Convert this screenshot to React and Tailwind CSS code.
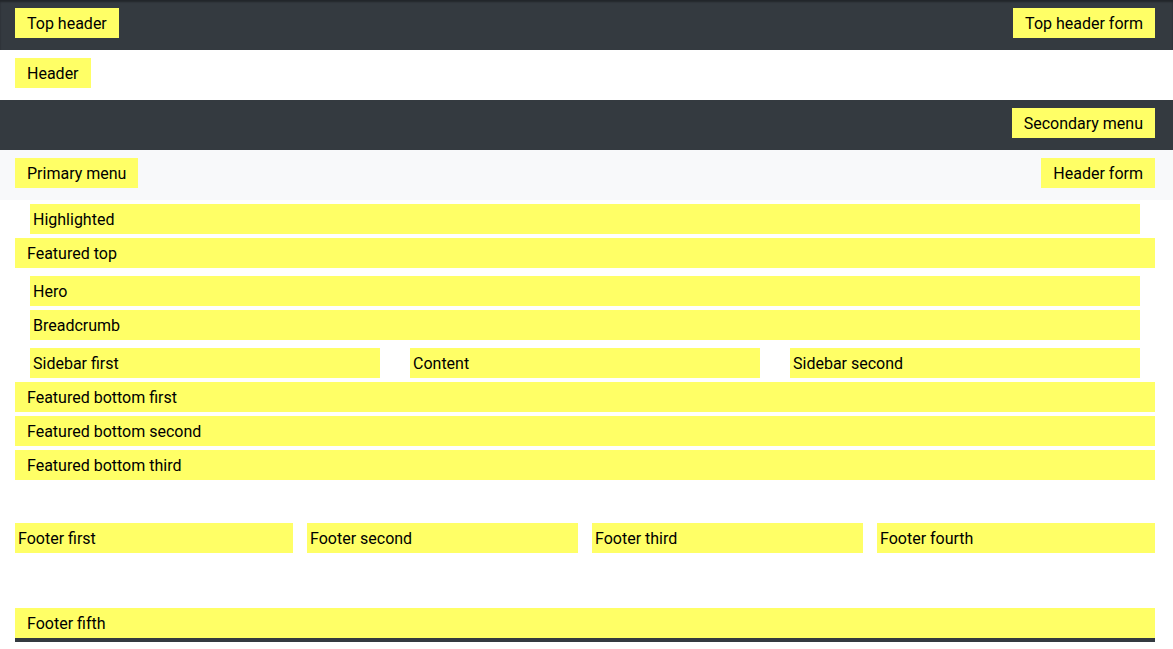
export default function App() {
  const box = "bg-[#ffff66] h-[30px] flex items-center pt-[2px] text-[16px] text-black leading-[24px]";
  return (
    <div className="w-[1173px] min-h-[649px] bg-white font-['Roboto',sans-serif]">
      <div className="bg-[#343a40] h-[50px] pl-[15px] pr-[18px] pt-[8px] flex items-start justify-between shadow-[inset_0_2px_2px_rgba(0,0,0,0.35)]">
        <div className={`${box} px-[12px]`}>Top header</div>
        <div className={`${box} px-[12px]`}>Top header form</div>
      </div>
      <div className="bg-white h-[50px] pl-[15px] pr-[18px] pt-[8px] flex items-start">
        <div className={`${box} px-[12px]`}>Header</div>
      </div>
      <div className="bg-[#343a40] h-[50px] pl-[15px] pr-[18px] pt-[8px] flex items-start justify-end">
        <div className={`${box} px-[12px]`}>Secondary menu</div>
      </div>
      <div className="bg-[#f8f9fa] h-[50px] pl-[15px] pr-[18px] pt-[8px] flex items-start justify-between">
        <div className={`${box} px-[12px]`}>Primary menu</div>
        <div className={`${box} px-[12px]`}>Header form</div>
      </div>
      <div className="ml-[15px] w-[1140px] pt-[4px] flex flex-col">
        <div className="px-[15px]">
          <div className={`${box} pl-[3px]`}>Highlighted</div>
        </div>
        <div className={`${box} pl-[12px] mt-[4px]`}>Featured top</div>
        <div className="px-[15px] mt-[8px] flex flex-col gap-[4px]">
          <div className={`${box} pl-[3px]`}>Hero</div>
          <div className={`${box} pl-[3px]`}>Breadcrumb</div>
        </div>
        <div className="px-[15px] mt-[8px] grid grid-cols-3 gap-[30px]">
          <div className={`${box} pl-[3px]`}>Sidebar first</div>
          <div className={`${box} pl-[3px]`}>Content</div>
          <div className={`${box} pl-[3px]`}>Sidebar second</div>
        </div>
        <div className="mt-[4px] flex flex-col gap-[4px]">
          <div className={`${box} pl-[12px]`}>Featured bottom first</div>
          <div className={`${box} pl-[12px]`}>Featured bottom second</div>
          <div className={`${box} pl-[12px]`}>Featured bottom third</div>
        </div>
        <div className="mt-[43px] grid grid-cols-4">
          <div className="pr-[7px]">
            <div className={`${box} pl-[3px]`}>Footer first</div>
          </div>
          <div className="px-[7px]">
            <div className={`${box} pl-[3px]`}>Footer second</div>
          </div>
          <div className="px-[7px]">
            <div className={`${box} pl-[3px]`}>Footer third</div>
          </div>
          <div className="pl-[7px]">
            <div className={`${box} pl-[3px]`}>Footer fourth</div>
          </div>
        </div>
        <div className="mt-[55px] border-b-[4px] border-[#343a40]">
          <div className={`${box} pl-[12px]`}>Footer fifth</div>
        </div>
      </div>
    </div>
  );
}
